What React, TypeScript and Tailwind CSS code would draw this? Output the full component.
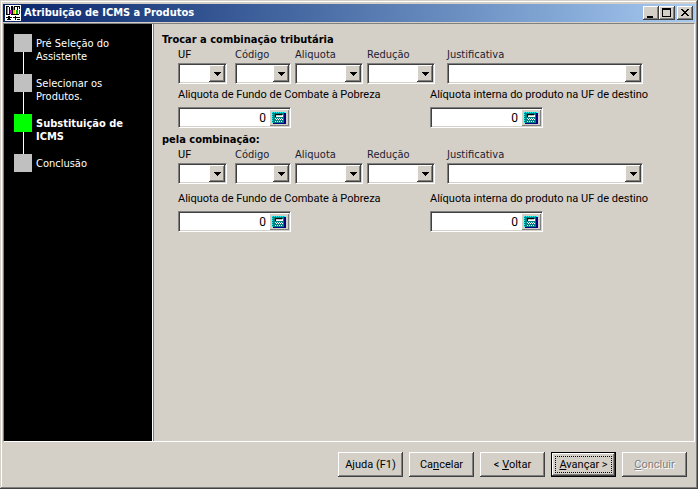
import { type ReactNode } from "react";

const raised =
  "bg-[#d4d0c8] shadow-[inset_-1px_-1px_0_#404040,inset_1px_1px_0_#ffffff,inset_-2px_-2px_0_#808080]";
const sunken =
  "border border-t-[#808080] border-l-[#808080] border-r-white border-b-white shadow-[inset_1px_1px_0_#404040,inset_-1px_-1px_0_#d4d0c8] bg-white";
const tahoma = "font-['DejaVu_Sans_Condensed','DejaVu_Sans',sans-serif]";

function AppIcon() {
  return (
    <svg width="16" height="16" viewBox="0 0 16 16" shapeRendering="crispEdges" aria-hidden="true">
      <path fill="#fff" d="M0 0h16v16H0z" />
      <path
        fill="#000"
        d="M1 1h3v1H1zM1 2h1v8H1zM1 9h4v1H1zM4 2h1v8H4zM6 1h2v9H6zM9 1h6v1H9zM9 2h1v3H9zM12 2h1v3h-1zM6 9h8v1H6zM14 2h1v2h-1zM1 12h6v1H1zM3 11h2v4H3zM2 14h1v1H2zM5 14h1v1H5zM8 12h2v1H8zM10 11h1v4h-1zM11 12h3v1h-3zM12 14h3v1h-3zM14 12h1v1h-1z"
      />
      <path fill="#808080" d="M2 2h1v7H2zM8 2h1v3H8z" />
      <path fill="#d000d0" d="M5 5h2v4H5z" />
      <path fill="#e8c800" d="M8 5h2v4H8z" />
      <path fill="#00c000" d="M11 5h2v4h-2z" />
      <path fill="#e00000" d="M14 5h1v4h-1z" />
    </svg>
  );
}

function CalculatorIcon() {
  return (
    <svg width="14" height="12" viewBox="0 0 14 12" shapeRendering="crispEdges" aria-hidden="true">
      <path fill="#000080" d="M1 1h13v11H1z" />
      <path fill="#008080" d="M0 0h12v11H0z" />
      <path
        fill="#00ffff"
        d="M0 0h1v1H0zM2 0h1v1H2zM4 0h1v1H4zM6 0h1v1H6zM8 0h1v1H8zM10 0h1v1h-1zM12 0h1v1h-1zM0 2h1v1H0zM0 4h1v1H0zM0 6h1v1H0zM0 8h1v1H0zM0 10h1v1H0z"
      />
      <path fill="#000" d="M3 2h7v3H3z" />
      <path fill="#fff" d="M4 3h7v2H4z" />
      <path fill="#c0c0c0" d="M4 3h6v1H4z" />
      <path
        fill="#fff"
        d="M3 6h1v1H3zM5 6h1v1H5zM7 6h1v1H7zM9 6h1v1H9zM4 7h1v1H4zM6 7h1v1H6zM8 7h1v1H8zM10 7h1v1h-1zM3 9h1v1H3zM5 9h1v1H5zM7 9h1v1H7zM9 9h1v1H9z"
      />
    </svg>
  );
}

function TitleButton({ label, children }: { label: string; children: ReactNode }) {
  return (
    <button type="button" aria-label={label} className={`h-[14px] w-4 ${raised}`}>
      <svg width="16" height="14" viewBox="0 0 16 14" shapeRendering="crispEdges" aria-hidden="true">
        {children}
      </svg>
    </button>
  );
}

type ComboProps = { id: string; label: string; box: string; legacy?: boolean };

function Combo({ id, label, box, legacy }: ComboProps) {
  return (
    <div className={box}>
      <label
        htmlFor={id}
        className={`block h-4 text-[11px] leading-4 whitespace-nowrap ${legacy ? "" : `text-[#1c1c30] ${tahoma}`}`}
      >
        {label}
      </label>
      <div className={`grid h-[21px] grid-rows-[minmax(0,1fr)] p-px ${sunken}`}>
        <select
          id={id}
          className="col-start-1 row-start-1 h-full w-full appearance-none bg-transparent text-[11px] outline-none"
        >
          <option></option>
        </select>
        <span
          className={`pointer-events-none col-start-1 row-start-1 flex w-4 items-center justify-center justify-self-end ${raised}`}
        >
          <svg width="7" height="4" viewBox="0 0 7 4" shapeRendering="crispEdges" aria-hidden="true">
            <path d="M0 0h7v1H0zM1 1h5v1H1zM2 2h3v1H2zM3 3h1v1H3z" />
          </svg>
        </span>
      </div>
    </div>
  );
}

function RateField({ id, label, box }: { id: string; label: string; box: string }) {
  return (
    <div className={box}>
      <label htmlFor={id} className="block h-5 text-[11px] leading-4 whitespace-nowrap">
        {label}
      </label>
      <div className={`flex h-[21px] w-[113px] p-px ${sunken}`}>
        <input
          id={id}
          defaultValue="0"
          className="min-w-0 flex-1 bg-transparent pr-[3px] text-right text-[12px] outline-none"
        />
        <button
          type="button"
          aria-label="Calculadora"
          className="flex w-5 items-center justify-center bg-[#d4d0c8] shadow-[inset_1px_1px_0_#ffffff,inset_-1px_-1px_0_#808080]"
        >
          <CalculatorIcon />
        </button>
      </div>
    </div>
  );
}

function Combination({ prefix, title, gap }: { prefix: string; title: string; gap: string }) {
  return (
    <section>
      <h2 className={`h-[15px] text-[11px] leading-[15px] font-bold ${tahoma}`}>{title}</h2>
      <div className="pl-4">
        <div className="flex">
          <Combo id={`${prefix}-uf`} label="UF" box="mr-2 w-[49px]" legacy />
          <Combo id={`${prefix}-codigo`} label="Código" box="mr-1 w-14" />
          <Combo id={`${prefix}-aliquota`} label="Aliquota" box="mr-1 w-[68px]" />
          <Combo id={`${prefix}-reducao`} label="Redução" box="mr-3 w-[68px]" />
          <Combo id={`${prefix}-justificativa`} label="Justificativa" box="w-[196px]" />
        </div>
        <div className={`flex ${gap}`}>
          <RateField id={`${prefix}-fundo`} label="Aliquota de Fundo de Combate à Pobreza" box="w-[252px]" />
          <RateField id={`${prefix}-interna`} label="Alíquota interna do produto na UF de destino" box="" />
        </div>
      </div>
    </section>
  );
}

const steps = [
  { lines: ["Pré Seleção do", "Assistente"], active: false },
  { lines: ["Selecionar os", "Produtos."], active: false },
  { lines: ["Substituição de", "ICMS"], active: true },
  { lines: ["Conclusão"], active: false },
];

function FooterButton({
  children,
  primary,
  disabled,
}: {
  children: ReactNode;
  primary?: boolean;
  disabled?: boolean;
}) {
  const look = primary
    ? "border border-black bg-[#d4d0c8] p-[3px] shadow-[inset_-1px_-1px_0_#404040,inset_1px_1px_0_#ffffff,inset_-2px_-2px_0_#808080]"
    : raised;
  return (
    <button
      type="button"
      disabled={disabled}
      className={`h-[25px] w-[65px] text-[11px] leading-4 whitespace-nowrap ${look} ${
        disabled ? "text-[#808080] [text-shadow:1px_1px_0_#ffffff]" : "text-black"
      }`}
    >
      {primary ? (
        <span className="flex h-full items-center justify-center outline-1 -outline-offset-1 outline-dotted outline-black">
          <span>{children}</span>
        </span>
      ) : (
        children
      )}
    </button>
  );
}

export default function App() {
  return (
    <div className="flex min-h-screen flex-col bg-[#d4d0c8] px-[3px] pt-1 pb-[3px] font-[Roboto,'Liberation_Sans',sans-serif] text-black shadow-[inset_-1px_-1px_0_#404040,inset_1px_1px_0_#d4d0c8,inset_-2px_-2px_0_#808080,inset_2px_2px_0_#ffffff]">
      <header className="mb-px flex h-[18px] items-center bg-linear-to-r from-[#0a246a] to-[#a6caf0] pr-0.5 pl-0.5">
        <AppIcon />
        <h1 className={`ml-[3px] flex-1 text-[11px] leading-4 font-bold text-white ${tahoma}`}>
          Atribuição de ICMS a Produtos
        </h1>
        <TitleButton label="Minimizar">
          <path d="M4 10h6v2H4z" />
        </TitleButton>
        <TitleButton label="Maximizar">
          <path fillRule="evenodd" d="M3 2h9v9H3zM4 4v6h7V4z" />
        </TitleButton>
        <span className="w-0.5" />
        <TitleButton label="Fechar">
          <path d="M4 3h2v1H4zM10 3h2v1h-2zM5 4h2v1H5zM9 4h2v1H9zM6 5h4v1H6zM7 6h2v1H7zM6 7h4v1H6zM5 8h2v1H5zM9 8h2v1H9zM4 9h2v1H4zM10 9h2v1h-2z" />
        </TitleButton>
      </header>

      <div className="flex flex-1 border border-t-[#808080] border-r-white border-b-white border-l-[#808080]">
        <nav
          className={`w-[148px] shrink-0 bg-black pt-2.5 pl-2.5 text-[11px] leading-[13px] text-white ${tahoma}`}
        >
          <ol>
            {steps.map((step, i) => (
              <li key={step.lines[0]} className="flex h-10 gap-1" aria-current={step.active ? "step" : undefined}>
                <div className="flex w-[18px] flex-col items-center">
                  <span className={`h-[18px] w-[18px] shrink-0 ${step.active ? "bg-[#00ff00]" : "bg-[#c0c0c0]"}`} />
                  {i < steps.length - 1 && <span className="w-px flex-1 bg-white" />}
                </div>
                <div className={`pt-[3px] whitespace-nowrap ${step.active ? "font-bold" : ""}`}>
                  {step.lines.map((line) => (
                    <div key={line}>{line}</div>
                  ))}
                </div>
              </li>
            ))}
          </ol>
        </nav>
        <main className="flex flex-1 flex-col gap-1 border-l border-[#808080] pt-2 pl-2 shadow-[-1px_0_0_#ffffff] ml-px">
          <Combination prefix="origem" title="Trocar a combinação tributária" gap="mt-[3px]" />
          <Combination prefix="destino" title="pela combinação:" gap="mt-[7px]" />
        </main>
      </div>

      <footer className="flex justify-end gap-1.5 pt-2.5 pr-2 pb-[9px]">
        <FooterButton>Ajuda (F1)</FooterButton>
        <FooterButton>
          Ca<u>n</u>celar
        </FooterButton>
        <FooterButton>
          &lt; <u>V</u>oltar
        </FooterButton>
        <FooterButton primary>
          <u>A</u>vançar &gt;
        </FooterButton>
        <FooterButton disabled>
          <u>C</u>oncluir
        </FooterButton>
      </footer>
    </div>
  );
}
